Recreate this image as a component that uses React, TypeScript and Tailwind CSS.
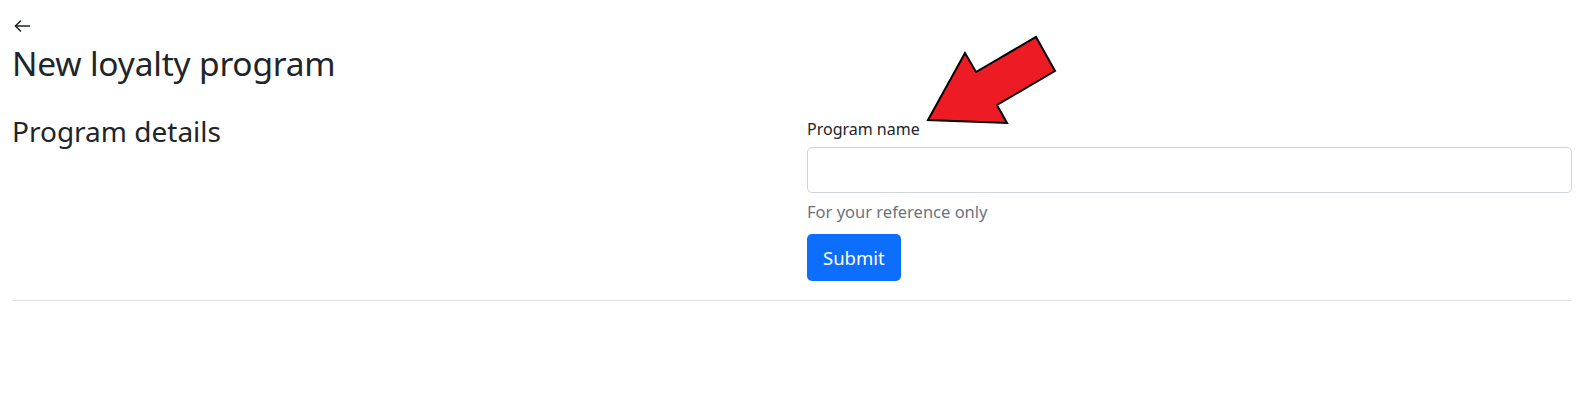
export default function App() {
  return (
    <div
      className="relative h-[402px] w-full overflow-hidden bg-white text-[#212529]"
      style={{ fontFamily: '"Noto Sans", "Open Sans", sans-serif' }}
    >
      <div className="pl-[12px] pr-[6px] pt-[20px]">
        <a href="#" className="block h-[12px] w-[18px] text-[#212529]">
          <svg width="18" height="12" viewBox="0 0 18 12" fill="none" stroke="currentColor" strokeWidth="1.6" strokeLinecap="round" strokeLinejoin="round">
            <path d="M3.5 6H17.5" />
            <path d="M8.5 1L3.5 6L8.5 11" />
          </svg>
        </a>
        <h1 className="mt-[9px] text-[33.5px] font-normal leading-[44px] tracking-[-0.2px]">New loyalty program</h1>

        <div className="mt-[28px] grid grid-cols-2 gap-[30px] pb-[19px]">
          <div>
            <h2 className="text-[28px] font-normal leading-[36px]">Program details</h2>
          </div>
          <form className="pt-[6px]" onSubmit={(e) => e.preventDefault()}>
            <label className="block text-[16px] leading-[20px]">Program name</label>
            <input
              type="text"
              className="mt-[8px] block h-[46px] w-full rounded-[5px] border border-[#ced4da] px-3 text-[16px] outline-none"
            />
            <div className="mt-[8px] text-[16.5px] leading-[22px] text-[#6c757d]">For your reference only</div>
            <button
              type="submit"
              className="mt-[11px] h-[47px] rounded-[5px] bg-[#0d6efd] px-[16px] text-[18.5px] text-white"
            >
              Submit
            </button>
          </form>
        </div>
        <hr className="border-t border-[#dee2e6]" />
      </div>

      <svg className="pointer-events-none absolute left-0 top-0" width="1578" height="402">
        <polygon
          points="928,120 965,53 976,72 1036,37 1055,71 997,105 1007,123"
          fill="#ed1c24"
          stroke="#000"
          strokeWidth="2"
          strokeLinejoin="miter"
        />
      </svg>
    </div>
  );
}
